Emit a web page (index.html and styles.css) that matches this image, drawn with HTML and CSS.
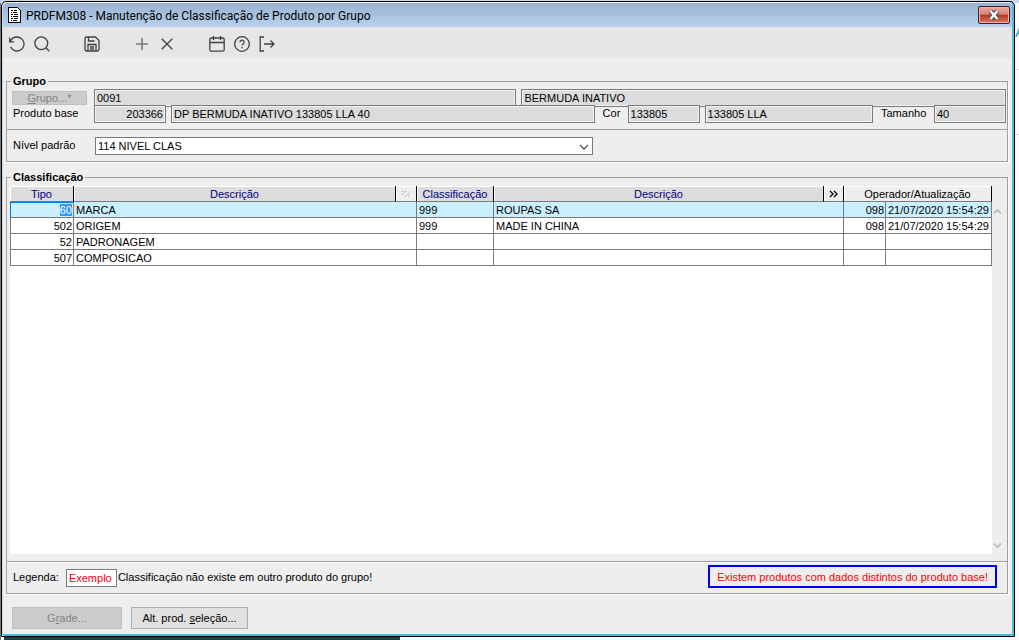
FILE: index.html
```html
<!DOCTYPE html>
<html lang="pt-BR">
<head>
    <meta charset="UTF-8">
    <meta name="viewport" content="width=device-width, initial-scale=1.0">
    <title>PRDFM308 - Manutenção de Classificação de Produto por Grupo</title>
    <link rel="stylesheet" href="styles.css">
</head>
<body>

<div class="behind">A</div>

<div class="window">

    <!-- Título -->
    <div class="titlebar">
        <svg class="app-icon" width="14" height="16" viewBox="0 0 14 16" shape-rendering="crispEdges">
            <path d="M1 1h9v1h1v1h1v12H1z" fill="#fff"/>
            <path d="M0 0h10v1H1v14H0zM10 1h1v1h-1zM11 2h1v1h-1zM12 3h1v13H0v-1h12z" fill="#000"/>
            <path d="M3 3h2v1H3zM6 3h3v1H6zM3 5h1v1H3zM5 5h4v1H5zM3 7h2v1H3zM6 7h4v1H6zM3 9h1v1H3zM5 9h5v1H5zM3 11h2v1H3zM6 11h4v1H6zM3 13h1v1H3zM5 13h4v1H5z" fill="#000"/>
        </svg>
        <span class="title">PRDFM308 - Manutenção de Classificação de Produto por Grupo</span>
        <button class="close" aria-label="Fechar">
            <svg width="12" height="10" viewBox="0 0 12 10">
                <path d="M2.5 1L9.5 9M9.5 1L2.5 9" stroke="#4d4d5c" stroke-width="4.6"/>
                <path d="M2.5 1L9.5 9M9.5 1L2.5 9" stroke="#fff" stroke-width="2.4"/>
            </svg>
        </button>
    </div>

    <!-- Barra de ferramentas -->
    <div class="toolbar">
        <button aria-label="Desfazer"><svg viewBox="0 0 16 16"><path d="M.7 1.5v4.3H5M1 5.8C2.2 3 4.9 1 8 1a7 7 0 1 1-6.4 9.8"/></svg></button>
        <button aria-label="Pesquisar"><svg viewBox="0 0 16 16"><circle cx="7.3" cy="7.3" r="6.4"/><path d="M12 12l3.3 3.3"/></svg></button>
        <button class="group" aria-label="Salvar"><svg viewBox="0 0 16 16"><path d="M1 2.5A1.5 1.5 0 0 1 2.5 1H11.5L15 4.5V13.5a1.5 1.5 0 0 1-1.5 1.5h-11A1.5 1.5 0 0 1 1 13.5zM4 15V8.5h8V15M4.5 1v4H10.5M6 11h4M6 13h4"/></svg></button>
        <button class="group" aria-label="Incluir"><svg class="soft" viewBox="0 0 16 16"><path d="M8 2v12M2 8h12"/></svg></button>
        <button aria-label="Excluir"><svg viewBox="0 0 16 16"><path d="M2.7 2.7l10.6 10.6M13.3 2.7L2.7 13.3"/></svg></button>
        <button class="group" aria-label="Calendário"><svg viewBox="0 0 16 16"><rect x=".8" y="2" width="14.4" height="13.2" rx="1.5"/><path d="M1 6.5h14M4.5 0v4M11.5 0v4"/></svg></button>
        <button aria-label="Ajuda"><svg viewBox="0 0 16 16"><circle cx="8" cy="8" r="7.3"/><path d="M5.9 6.2A2.1 2.1 0 1 1 9 8c-.8.4-1 .8-1 1.6M8 11v1.3"/></svg></button>
        <button aria-label="Sair"><svg viewBox="0 0 16 16"><path d="M5 1H1.2v14H5M5 8h10M11.5 4.5L15 8l-3.5 3.5"/></svg></button>
    </div>

    <!-- Grupo -->
    <fieldset class="panel">
        <legend>Grupo</legend>
        <div class="fields">
            <div class="row">
                <div class="name"><button class="group-button" disabled><u>G</u>rupo...*</button></div>
                <input class="wide" aria-label="Código do grupo" value="0091" readonly>
                <input class="group-name" aria-label="Nome do grupo" value="BERMUDA INATIVO" readonly>
            </div>
            <div class="row">
                <label class="name" for="product">Produto base</label>
                <input class="code right" id="product" value="203366" readonly>
                <input class="product-name" aria-label="Descrição do produto" value="DP BERMUDA INATIVO 133805 LLA 40" readonly>
                <label class="color-label" for="color">Cor</label>
                <input class="code" id="color" value="133805" readonly>
                <input class="color-name" aria-label="Descrição da cor" value="133805 LLA" readonly>
                <label class="size-label" for="size">Tamanho</label>
                <input class="code" id="size" value="40" readonly>
            </div>
        </div>
        <div class="level">
            <label class="name" for="level">Nível padrão</label>
            <div class="select">
                <select id="level"><option>114 NIVEL CLAS</option></select>
                <svg width="10" height="6" viewBox="0 0 10 6"><path d="M1 1l4 4 4-4" fill="none" stroke="#505050" stroke-width="1.3"/></svg>
            </div>
        </div>
    </fieldset>

    <!-- Classificação -->
    <fieldset class="panel classification">
        <legend>Classificação</legend>
        <div class="grid">
            <div class="sheet">
                <table>
                    <colgroup>
                        <col class="c-type"><col class="c-desc"><col class="c-icon"><col class="c-class">
                        <col><col class="c-more"><col class="c-oper"><col class="c-date">
                    </colgroup>
                    <thead>
                        <tr>
                            <th>Tipo</th>
                            <th>Descrição</th>
                            <th class="light">
                                <svg width="10" height="8" viewBox="0 0 10 8"><path d="M1 2l1-1M1 5l4-4M4 7l5-5M7 7l2-2" fill="none" stroke="#a8a8a8" stroke-dasharray="1.4 .8"/></svg>
                            </th>
                            <th>Classificação</th>
                            <th>Descrição</th>
                            <th class="light">
                                <svg width="10" height="8" viewBox="0 0 10 8"><path d="M1 1l3 3-3 3M5 1l3 3-3 3" fill="none" stroke="#000" stroke-width="1.3"/></svg>
                            </th>
                            <th class="light" colspan="2">Operador/Atualização</th>
                        </tr>
                    </thead>
                    <tbody>
                        <tr class="selected"><td class="right"><mark>60</mark></td><td colspan="2">MARCA</td><td>999</td><td colspan="2">ROUPAS SA</td><td class="right">098</td><td>21/07/2020 15:54:29</td></tr>
                        <tr><td class="right">502</td><td colspan="2">ORIGEM</td><td>999</td><td colspan="2">MADE IN CHINA</td><td class="right">098</td><td>21/07/2020 15:54:29</td></tr>
                        <tr><td class="right">52</td><td colspan="2">PADRONAGEM</td><td></td><td colspan="2"></td><td></td><td></td></tr>
                        <tr><td class="right">507</td><td colspan="2">COMPOSICAO</td><td></td><td colspan="2"></td><td></td><td></td></tr>
                    </tbody>
                </table>
            </div>
            <div class="scrollbar">
                <svg width="9" height="7" viewBox="0 0 9 7"><path d="M1 5.5l3.5-3.5L8 5.5"/></svg>
                <svg width="9" height="7" viewBox="0 0 9 7"><path d="M1 1.5l3.5 3.5L8 1.5"/></svg>
            </div>
        </div>
        <div class="caption">
            <span>Legenda:</span>
            <span class="example">Exemplo</span>
            <span>Classificação não existe em outro produto do grupo!</span>
            <span class="warning">Existem produtos com dados distintos do produto base!</span>
        </div>
    </fieldset>

    <!-- Botões -->
    <div class="actions">
        <button class="grade" disabled>G<u>r</u>ade...</button>
        <button class="change">Alt. prod. <u>s</u>eleção...</button>
    </div>
</div>

</body>
</html>
```
FILE: styles.css
```css
* {
    box-sizing: border-box;
}

body {
    margin: 0;
    height: 100vh;
    padding: 1px 4px 3px 1px;
    display: flex;
    font-family: "Liberation Sans", Arial, sans-serif;
    font-size: 11px;
    line-height: 14px;
    color: #000;
    background:
        linear-gradient(#2f383c, #2f383c) 4px 100% / 396px 3px no-repeat,
        linear-gradient(#c9d6ea, #c9d6ea) 0 0 / 100% 3px no-repeat,
        linear-gradient(#dcdcdc, #dcdcdc) 100% 69px / 4px 1px no-repeat,
        linear-gradient(#dcdcdc, #dcdcdc) 100% 134px / 4px 1px no-repeat,
        linear-gradient(#777, #777) 0 0 / 1px 100% no-repeat,
        #fff;
}

/* piece of the page behind the window */
.behind {
    position: absolute;
    top: 25px;
    right: 0;
    width: 4px;
    overflow: hidden;
    color: #0a9fd8;
    font-size: 15px;
}

button, input, select {
    font: inherit;
    color: inherit;
    margin: 0;
}

.window {
    flex: 1;
    min-width: 0;
    display: flex;
    flex-direction: column;
    background-color: #eee;
    border: 1px solid #000;
    border-radius: 5px 5px 0 0;
    box-shadow: inset 1px 0 #c5d8ec, inset -2px 0 #45bfe0, inset 0 -2px #45bfe0;
    padding: 1px 2px 2px 1px;
}

.titlebar {
    display: flex;
    align-items: center;
    height: 24px;
    padding: 0 2px 0 5px;
    background: linear-gradient(#98b3d2, #b9d1ea);
    border-radius: 4px 4px 0 0;
}

.title {
    flex: 1;
    padding: 2px 0 0 4px;
    font-family: Roboto, "Open Sans", sans-serif;
    font-size: 12px;
}

.close {
    display: flex;
    align-items: center;
    justify-content: center;
    width: 32px;
    height: 18px;
    padding: 0;
    border: 1px solid #4d1620;
    border-radius: 2px;
    background: linear-gradient(#e8a99c, #d98576 45%, #b8351f 50%, #d47a62);
    box-shadow: inset 0 0 0 1px #e9b3a8;
}

.toolbar {
    display: flex;
    height: 31px;
    padding: 3px 0 0 1px;
    background-color: #e6e6e6;
}

.toolbar button {
    display: flex;
    align-items: center;
    justify-content: center;
    width: 25px;
    padding: 0;
    border: none;
    background: none;
}

.toolbar .group {
    margin-left: 25px;
}

.toolbar svg {
    width: 16px;
    height: 16px;
    fill: none;
    stroke: #404040;
    stroke-width: 1.3;
}

.toolbar .soft {
    stroke: #777;
    stroke-width: 1.6;
}

.panel {
    min-width: 0;
    margin: 16px 4px 0 3px;
    padding: 0;
    border: 1px solid #a0a0a0;
    box-shadow: 1px 1px #fff;
}

.panel legend {
    margin-left: 4px;
    padding: 0 2px;
    font-weight: bold;
}

.fields {
    padding: 1px 1px 6px 5px;
    border-bottom: 1px solid #a0a0a0;
}

.row {
    display: flex;
}

.row + .row {
    margin-top: -2px;
}

.row input {
    min-width: 0;
    height: 18px;
    margin-right: 5px;
    padding: 0 2px;
    border: 1px solid #7b7b7b;
    border-radius: 0;
    background-color: #dcdcdc;
    box-shadow: inset 0 0 0 1px #f2f2f2;
    outline: none;
}

.row input:last-child {
    margin-right: 0;
}

.name {
    flex: none;
    width: 82px;
    padding: 1px 0 0 1px;
}

.group-button {
    display: block;
    width: 75px;
    height: 14px;
    margin: 1px 0 0 -1px;
    padding: 0;
    line-height: 12px;
    border: 1px solid #bfbfbf;
    background-color: #ccc;
    color: #838383;
}

.row .wide {
    flex: 422;
}

.row .group-name {
    flex: 485;
}

.row .code {
    flex: none;
    width: 72px;
}

.row .product-name {
    flex: 18;
}

.row .color-name {
    flex: 7;
}

.color-label, .size-label {
    flex: none;
    width: 28px;
    padding: 1px 0 0 3px;
}

.size-label {
    width: 56px;
}

.right {
    text-align: right;
}

.level {
    display: flex;
    padding: 7px 0 6px 5px;
}

.select {
    position: relative;
    width: 50%;
    margin-left: 1px;
}

.select select {
    display: block;
    width: 100%;
    height: 18px;
    padding: 0 2px;
    border: 1px solid #7b7b7b;
    border-radius: 0;
    background-color: #fff;
    appearance: none;
}

.select svg {
    position: absolute;
    right: 4px;
    top: 7px;
}

.classification {
    flex: 1;
    display: flex;
    flex-direction: column;
    margin-top: 8px;
}

.grid {
    flex: 1;
    display: flex;
    padding: 2px 4px 7px 3px;
}

.sheet {
    flex: 1;
    background: linear-gradient(#eee, #eee) 0 0 / 100% 16px no-repeat, #fff;
}

table {
    width: 100%;
    table-layout: fixed;
    border-spacing: 0;
}

.c-type { width: 64px; }
.c-desc { width: 322px; }
.c-icon { width: 21px; }
.c-class { width: 77px; }
.c-more { width: 20px; }
.c-oper { width: 42px; }
.c-date { width: 106px; }

th {
    height: 16px;
    padding: 0;
    font-weight: normal;
    color: #000080;
    background-color: #dcdcdc;
    border-right: 1px solid #000;
    border-bottom: 1px solid #7b7b7b;
    box-shadow: inset 1px 1px #fff;
}

th.light {
    color: #000;
    background-color: #eee;
}

td {
    height: 16px;
    padding: 0 1px 0 2px;
    line-height: 14px;
    white-space: nowrap;
    border-right: 1px solid #7b7b7b;
    border-bottom: 1px solid #7b7b7b;
}

td:first-child {
    border-left: 1px solid #7b7b7b;
}

.selected td {
    background-color: #caf0ff;
}

.selected td:first-child {
    border-left-color: #0078d7;
    box-shadow: inset 0 1px #0078d7;
}

mark {
    background-color: #3399ff;
    color: #fff;
}

.scrollbar {
    display: flex;
    flex-direction: column;
    justify-content: space-between;
    align-items: center;
    width: 11px;
    padding: 22px 0 5px;
}

.scrollbar svg {
    fill: none;
    stroke: #b5b5b5;
    stroke-width: 1.6;
}

.caption {
    display: flex;
    align-items: center;
    height: 32px;
    padding: 0 10px 2px 6px;
    border-top: 1px solid #a0a0a0;
    box-shadow: inset 0 1px #fff;
}

.example {
    width: 51px;
    height: 18px;
    margin: 2px 1px 0 7px;
    padding: 1px 2px;
    border: 1px solid #7b7b7b;
    background-color: #fff;
    color: #f00020;
}

.warning {
    margin-left: auto;
    padding: 3px 7px 2px;
    border: 2px solid #0000f0;
    color: #f00;
}

.actions {
    display: flex;
    gap: 9px;
    padding: 13px 0 5px 9px;
}

.actions button {
    height: 22px;
    padding: 0;
    border: 1px solid #adadad;
    background-color: #e1e1e1;
}

.actions .grade {
    width: 110px;
    border-color: #bfbfbf;
    background-color: #ccc;
    color: #838383;
}

.actions .change {
    width: 117px;
}
```
